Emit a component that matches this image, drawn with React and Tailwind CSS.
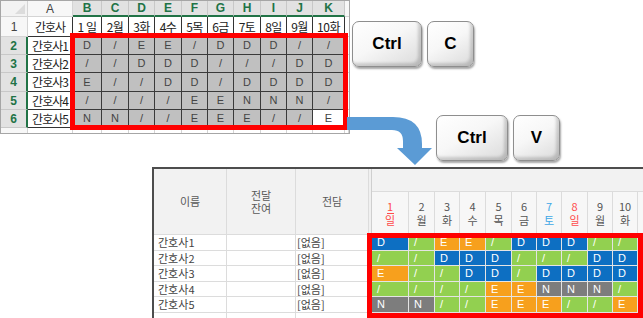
import React from "react";

const data = ["D/EE/DDD//", "//DDD///DD", "E//DD/DDDD", "////EENNN/", "NN//EEE//E"];
const cols = ["B", "C", "D", "E", "F", "G", "H", "I", "J", "K"];
const days1 = ["1 일", "2월", "3화", "4수", "5목", "6금", "7토", "8일", "9월", "10화"];
const days = [
  ["1", "일", "red", true],
  ["2", "월", "gray"],
  ["3", "화", "gray"],
  ["4", "수", "gray"],
  ["5", "목", "gray"],
  ["6", "금", "gray"],
  ["7", "토", "blue"],
  ["8", "일", "red"],
  ["9", "월", "gray"],
  ["10", "화", "gray"],
];

const colorCls = {
  D: "bg-[#0d6fc2]",
  "/": "bg-[#92d050]",
  E: "bg-[#f7a01d]",
  N: "bg-[#7d7d7d]",
};

const dayColor = {
  red: "text-[#ff4a4a]",
  gray: "text-[#555555]",
  blue: "text-[#3ea7e6]",
};

function Excel() {
  const hdr = "flex items-center justify-center border-r border-b leading-none";
  return (
    <div className="relative w-[350px] h-[134px] border border-[#a6a6a6] bg-white font-['Noto_Sans_CJK_KR',sans-serif] text-[11px] text-[#222]">
      <div className="grid grid-cols-[27px_45px_29px_27px_26px_27px_26px_26px_27px_26px_26px_32px_4px] grid-rows-[16px_20px_18px_18px_19px_18px_18px_5px]">
        <div className="relative bg-[#f3f3f3] border-r border-b border-[#d4d4d4]">
          <svg className="absolute right-[2px] bottom-[2px]" width="10" height="10" viewBox="0 0 10 10">
            <polygon points="10,0 10,10 0,10" fill="#dcdcdc" />
          </svg>
        </div>
        <div className={`${hdr} bg-[#f7f7f7] border-[#d4d4d4] text-[#444] font-['Liberation_Sans'] text-[12px]`}>A</div>
        {cols.map((c) => (
          <div
            key={c}
            className={`${hdr} bg-[#e2e2e2] border-r-[#c8c8c8] border-b-2 border-b-[#217346] text-[#217346] font-bold font-['Liberation_Sans'] text-[12px]`}
          >
            {c}
          </div>
        ))}
        <div className="bg-[#f7f7f7] border-b border-[#d4d4d4]" />

        <div className={`${hdr} bg-[#f7f7f7] border-[#d4d4d4] text-[#444] font-['Liberation_Sans'] text-[12px]`}>1</div>
        <div className={`${hdr} border-r-[#333] border-b-[#333] tracking-[-1px] text-[12px]`}>간호사</div>
        {days1.map((d) => (
          <div key={d} className={`${hdr} border-[#333] tracking-[-0.5px] text-[12px]`}>
            {d}
          </div>
        ))}
        <div className="border-b border-[#d4d4d4]" />

        {data.map((row, r) => (
          <React.Fragment key={r}>
            <div className={`${hdr} bg-[#e2e2e2] border-r-2 border-r-[#217346] border-b-[#c8c8c8] text-[#217346] font-bold font-['Liberation_Sans'] text-[12px]`}>
              {r + 2}
            </div>
            <div className={`${hdr} border-[#333] tracking-[-1px] text-[12px]`}>간호사{r + 1}</div>
            {row.split("").map((ch, c) => (
              <div
                key={c}
                className={`${hdr} border-[#3a3a3a] text-[#444] font-['Liberation_Sans'] text-[11px] ${
                  r === 4 && c === 9 ? "bg-white" : "bg-[#c0c0c0]"
                }`}
              >
                {ch}
              </div>
            ))}
            <div className="border-b border-[#d4d4d4]" />
          </React.Fragment>
        ))}

        <div className="bg-[#f7f7f7] border-r border-[#d4d4d4]" />
        {Array.from({ length: 12 }).map((_, i) => (
          <div key={i} className="border-r border-[#d4d4d4]" />
        ))}
      </div>
      <div className="absolute left-[69px] top-[32px] w-[278px] h-[97px] border-[5px] border-[#ff0000]" />
    </div>
  );
}

function Key({ className, label }) {
  return (
    <div
      className={`${className} h-[46px] rounded-[7px] border border-[#8e8e8e] bg-[linear-gradient(150deg,#ffffff_0%,#f7f7f7_45%,#dadada_100%)] shadow-[inset_-3px_-3px_3px_rgba(0,0,0,0.16),1px_2px_2px_rgba(0,0,0,0.35)] flex items-center justify-center font-['Liberation_Sans'] font-bold text-[17px] text-black`}
    >
      {label}
    </div>
  );
}

function Schedule() {
  const line = "border-r border-b border-[#dcdcdc]";
  return (
    <div className="relative ml-[152px] w-[520px] border-l-2 border-t-2 border-[#4d4d4d] font-['Noto_Sans_CJK_KR',sans-serif] text-[11px] text-[#444]">
      <div className="grid grid-cols-[73px_69px_73px_3px_37px_26px_25px_26px_26px_25px_25px_26px_25px_25px_25px] grid-rows-[23px_43px_16px_15px_16px_15px_16px_10px]">
        <div className={`${line} row-span-2 bg-[#f2f2f2] flex items-center justify-center text-[#595959]`}>이름</div>
        <div className={`${line} row-span-2 bg-[#f2f2f2] flex items-center justify-center text-center whitespace-pre-line leading-[13px] text-[#595959]`}>
          {"전달\n잔여"}
        </div>
        <div className={`${line} row-span-2 bg-[#f2f2f2] flex items-center justify-center text-[#595959]`}>전담</div>
        <div className="row-span-8 bg-[#f0f0f0] border-r border-[#cfcfcf]" />
        <div className="col-span-11 bg-[#f2f2f2] border-b border-[#dcdcdc]" />
        {days.map(([n, d, c, u]) => (
          <div key={n} className={`${line} relative bg-[#f7f7f7] flex items-center justify-center text-center whitespace-pre-line leading-[14px] ${dayColor[c]}`}>
            {`${n}\n${d}`}
            {u ? <div className="absolute left-[15px] top-[21px] w-[7px] h-px bg-[#ff4a4a]" /> : null}
          </div>
        ))}
        <div className="border-b border-[#dcdcdc] bg-[#f7f7f7]" />

        {data.map((row, r) => (
          <React.Fragment key={r}>
            <div className={`${line} flex items-center pl-[4px]`}>간호사{r + 1}</div>
            <div className={line} />
            <div className={`${line} flex items-center pl-[1px]`}>[없음]</div>
            {row.split("").map((ch, c) => (
              <div
                key={c}
                className={`border-r border-b border-[#e4e4e4] flex items-center pl-[5px] text-white font-['Liberation_Sans'] text-[11px] leading-none ${colorCls[ch]}`}
              >
                {ch}
              </div>
            ))}
            <div className="border-b border-[#e4e4e4] bg-[#92d050]" />
          </React.Fragment>
        ))}
        <div className="border-r border-[#dcdcdc]" />
        <div className="border-r border-[#dcdcdc]" />
        <div className="border-r border-[#dcdcdc]" />
        <div className="col-span-11" />
      </div>
      <div className="absolute left-[213px] top-[64px] w-[276px] h-[85px] border-[5px] border-[#ff0000]" />
    </div>
  );
}

export default function App() {
  return (
    <div className="relative w-[643px] h-[318px] bg-white overflow-hidden">
      <div className="flex h-[167px]">
        <Excel />
        <div className="flex flex-col">
          <div className="flex gap-[5px] mt-[21px] ml-[2px]">
            <Key className="w-[70px]" label="Ctrl" />
            <Key className="w-[47px]" label="C" />
          </div>
          <div className="flex gap-[5px] mt-[48px] ml-[86px]">
            <Key className="w-[72px]" label="Ctrl" />
            <Key className="w-[47px]" label="V" />
          </div>
        </div>
      </div>
      <Schedule />
      <svg className="absolute left-[340px] top-[110px]" width="100" height="60" viewBox="340 110 100 60">
        <path
          d="M347,117 H393 Q422,117 422,144 V148 H432 L415,165 L397,148 H403 V141 Q403,130 392,130 H347 Z"
          fill="#5b9bd5"
        />
      </svg>
    </div>
  );
}
